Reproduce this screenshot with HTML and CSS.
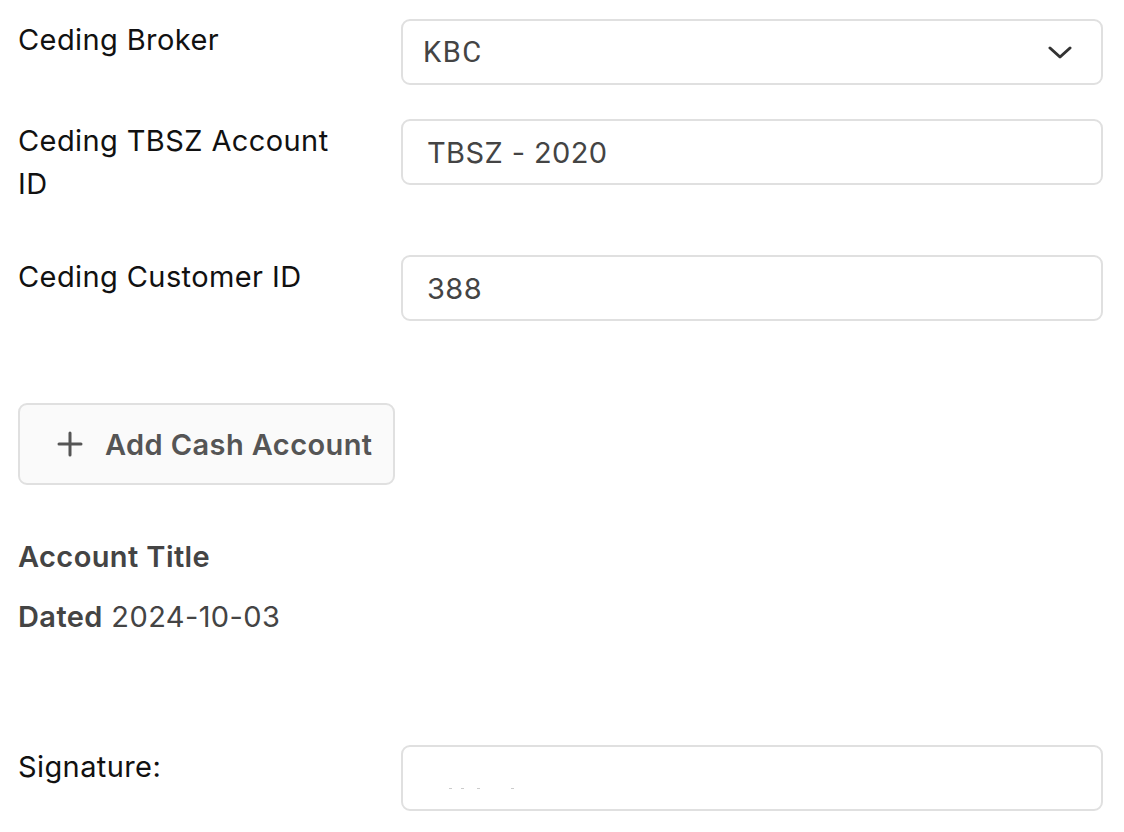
FILE: index.html
```html
<!DOCTYPE html>
<html>
<head>
<meta charset="utf-8">
<link rel="stylesheet" href="styles.css">
</head>
<body>
<div class="form">
  <div class="row row-1">
    <div class="label">Ceding Broker</div>
    <div class="field select">
      <span class="value kbc">KBC</span>
      <svg class="chev" width="24" height="13" viewBox="0 0 24 13"><path d="M2 2 L12 11 L22 2" fill="none" stroke="#333" stroke-width="3" stroke-linecap="round" stroke-linejoin="round"/></svg>
    </div>
  </div>
  <div class="row row-2">
    <div class="label">Ceding TBSZ Account<br>ID</div>
    <div class="field"><span class="value">TBSZ - 2020</span></div>
  </div>
  <div class="row row-3">
    <div class="label">Ceding Customer ID</div>
    <div class="field"><span class="value">388</span></div>
  </div>
  <button class="add-btn">
    <svg width="26" height="26" viewBox="0 0 26 26"><path d="M13 2 V24 M2 13 H24" stroke="#555" stroke-width="3" stroke-linecap="round"/></svg>
    <span>Add Cash Account</span>
  </button>
  <div class="info">
    <div class="title">Account Title</div>
    <div class="dated"><b>Dated</b> 2024-10-03</div>
  </div>
  <div class="row row-sig">
    <div class="label">Signature:</div>
    <div class="field sig">
      <svg class="dots" width="80" height="4" viewBox="0 0 80 4"><g fill="#ccc"><rect x="0" y="1" width="3" height="1"/><rect x="12" y="1" width="3" height="1"/><rect x="28" y="1" width="3" height="1"/><rect x="62" y="1" width="3" height="1"/></g></svg>
    </div>
  </div>
</div>
</body>
</html>
```
FILE: styles.css
```css
* { box-sizing: border-box; }
html, body { margin: 0; padding: 0; background: #fff; }
body {
  font-family: "Inter", "Lato", sans-serif;
  font-size: 29px;
  letter-spacing: 0.4px;
  line-height: 43px;
  color: #111;
}
.form {
  padding: 18px 21px 0 18px;
  display: flex;
  flex-direction: column;
  align-items: flex-start;
}
.row {
  display: grid;
  grid-template-columns: 383px 1fr;
  width: 100%;
}
.label { color: #111; }
.row-1 .field { margin-top: 1px; }
.row-1 { margin-bottom: 34px; }
.row-2 { margin-bottom: 34px; }
.row-2 .label { padding-bottom: 16px; }
.row-3 { margin-bottom: 82px; }
.field {
  height: 66px;
  border: 2px solid #e0e0e0;
  border-radius: 9px;
  background: #fff;
  display: flex;
  align-items: center;
  padding: 0 24px;
  color: #444;
}
.select { padding: 0 29px 0 20px; justify-content: space-between; }
.kbc { font-family: "Roboto", sans-serif; font-size: 29px; letter-spacing: 1.5px; color: #444; }
.chev { display: block; }
.add-btn {
  font: inherit;
  letter-spacing: 0.4px;
  font-weight: 600;
  color: #555;
  background: #fafafa;
  border: 2px solid #e0e0e0;
  border-radius: 9px;
  height: 82px;
  width: 377px;
  padding: 0 0 0 37px;
  display: flex;
  align-items: center;
  gap: 22px;
  margin-bottom: 50px;
}
.add-btn svg { display: block; }
.info { color: #444; }
.title { font-weight: 600; margin-bottom: 17px; }
.dated b { font-weight: 600; }
.row-sig { margin-top: 107px; }
.sig { align-items: flex-end; padding-bottom: 18px; padding-left: 46px; }
.dots { display: block; }
```
